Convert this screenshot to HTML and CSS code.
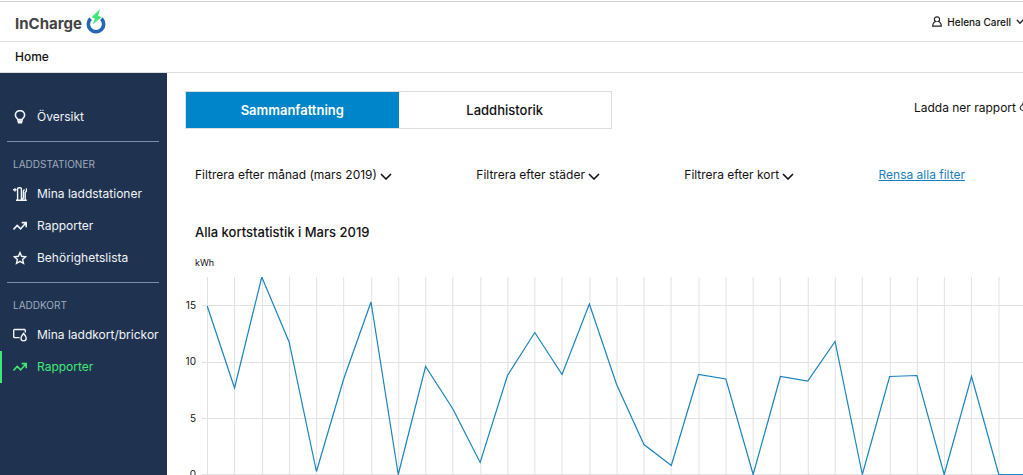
FILE: index.html
```html
<!DOCTYPE html>
<html lang="sv">
<head>
<meta charset="utf-8">
<meta name="viewport" content="width=device-width, initial-scale=1">
<title>InCharge</title>
<link rel="stylesheet" href="styles.css">
</head>
<body>
<header class="topbar">
  <a class="brand" href="#">
    <span class="brand-name">InCharge</span>
    <svg class="brand-mark" width="20" height="26" viewBox="0 0 20 26" aria-hidden="true">
      <path d="M4.6 9.6A7.7 7.7 0 1 0 15.4 9.6" fill="none" stroke="#2468b4" stroke-width="3.6"/>
      <path d="M14 0 5.6 8.2l3.2 1.2L6.8 15.2l8.8-7-3.4-1.5z" fill="#3fe877"/>
    </svg>
  </a>
  <button class="user" type="button">
    <svg width="10" height="11" viewBox="0 0 10 11" fill="none" stroke="#222" stroke-width="1.2" aria-hidden="true"><path d="M5 .8a2.5 2.5 0 0 1 1.3 4.7C8 6 9.2 7.5 9.3 10.2H.7C.8 7.5 2 6 3.7 5.5A2.5 2.5 0 0 1 5 .8z"/></svg>
    <span>Helena Carell</span>
    <svg width="8" height="6" viewBox="0 0 8 6" fill="none" stroke="#222" stroke-width="1.3" aria-hidden="true"><path d="m.8.8 3.2 3.4L7.2.8"/></svg>
  </button>
</header>
<nav class="crumbs" aria-label="Sökväg"><a href="#">Home</a></nav>
<div class="layout">
  <nav class="sidebar" aria-label="Meny">
    <a class="item" href="#">
      <svg class="icon" viewBox="0 0 14 14" fill="none" stroke="currentColor" stroke-width="1.6"><path d="M4.8 9.6C4.6 8.4 2.4 7.7 2.4 5a4.6 4.4 0 0 1 9.2 0c0 2.7-2.2 3.4-2.4 4.6z"/><path d="M4.2 11h5.6M4.8 12.6h4.4"/></svg>
      Översikt
    </a>
    <section class="group">
      <h2 class="group-title">LADDSTATIONER</h2>
      <a class="item" href="#">
        <svg class="icon" viewBox="0 0 14 14" fill="none" stroke="currentColor" stroke-width="1.4"><path d="M3 13.3h10.8M4.6 13V2q0-1.3 1.3-1.3h1.2Q8.4.7 8.4 2v11M8.4 11.5q2 1 2-.8V4.5q0-1.6 1.3-1.8M12.2 12.8V5.5l1.3-1.4V1.2M0 2.8h3.6M2 1.2v3.4"/></svg>
        Mina laddstationer
      </a>
      <a class="item" href="#">
        <svg class="icon" viewBox="0 0 14 14" fill="none" stroke="currentColor" stroke-width="1.6"><path d="m.5 10.5 3.7-4 3.4 3.4 5.2-6M8.7 3.6h4.5v4.6"/></svg>
        Rapporter
      </a>
      <a class="item" href="#">
        <svg class="icon" viewBox="0 0 14 14" fill="none" stroke="currentColor" stroke-width="1.4"><path d="m7 1.6 1.6 3.7 4 .4-3 2.7.9 4L7 10.3l-3.5 2.1.9-4-3-2.7 4-.4z"/></svg>
        Behörighetslista
      </a>
    </section>
    <section class="group">
      <h2 class="group-title">LADDKORT</h2>
      <a class="item" href="#">
        <svg class="icon" viewBox="0 0 14 14" fill="none" stroke="currentColor" stroke-width="1.4"><path d="M6.6 9.6H1.4L.7 8.9V2.2l.7-.7h10.2l.7.7v2.4M10.6 5.4c1.4 1.8 2.6 3.2 2.6 4.9a2.6 2.6 0 0 1-5.2 0c0-1.7 1.2-3.1 2.6-4.9z"/></svg>
        Mina laddkort/brickor
      </a>
      <a class="item active" href="#" aria-current="page">
        <svg class="icon" viewBox="0 0 14 14" fill="none" stroke="currentColor" stroke-width="1.6"><path d="m.5 10.5 3.7-4 3.4 3.4 5.2-6M8.7 3.6h4.5v4.6"/></svg>
        Rapporter
      </a>
    </section>
  </nav>
  <main class="content">
    <div class="actions">
      <div class="tabs" role="tablist">
        <button class="tab selected" type="button" role="tab" aria-selected="true">Sammanfattning</button>
        <button class="tab" type="button" role="tab" aria-selected="false">Laddhistorik</button>
      </div>
      <button class="download" type="button">
        <span>Ladda ner rapport</span>
        <svg width="14" height="12" viewBox="0 0 14 12" fill="none" stroke="#333" stroke-width="1.1" aria-hidden="true"><path d="M5 8.2H3.2a2.4 2.4 0 0 1-.2-4.7A4 4 0 0 1 10.6 3a2.7 2.7 0 0 1 .2 5.2H9M7 5v6M5 9l2 2 2-2"/></svg>
      </button>
    </div>
    <div class="filters">
      <button class="filter" type="button">Filtrera efter månad (mars 2019)<svg class="chevron" viewBox="0 0 12 7"><path d="m1 1 5 5 5-5"/></svg></button>
      <button class="filter" type="button">Filtrera efter städer<svg class="chevron" viewBox="0 0 12 7"><path d="m1 1 5 5 5-5"/></svg></button>
      <button class="filter" type="button">Filtrera efter kort<svg class="chevron" viewBox="0 0 12 7"><path d="m1 1 5 5 5-5"/></svg></button>
      <a class="clear" href="#">Rensa alla filter</a>
    </div>
    <h1 class="title">Alla kortstatistik i Mars 2019</h1>
    <div class="unit">kWh</div>
    <div class="chart">
      <div class="axis"><span>15</span><span>10</span><span>5</span><span>0</span></div>
      <svg class="plot" viewBox="0 0 820 198" preserveAspectRatio="none" role="img" aria-label="Förbrukning per dag i kWh">
        <path class="grid" d="M0 28.5H820M0 85.5H820M0 141.5H820M0 197.5H820M5.5 0V198M32.5 0V198M60.5 0V198M87.5 0V198M114.5 0V198M141.5 0V198M169.5 0V198M196.5 0V198M223.5 0V198M250.5 0V198M278.5 0V198M305.5 0V198M332.5 0V198M359.5 0V198M387.5 0V198M414.5 0V198M441.5 0V198M468.5 0V198M496.5 0V198M523.5 0V198M550.5 0V198M577.5 0V198M605.5 0V198M632.5 0V198M659.5 0V198M687.5 0V198M714.5 0V198M741.5 0V198M768.5 0V198M796 0V198"/>
        <polyline class="series" points="5.2,29 32.5,111 59.7,0 87,65 114.3,194.5 141.5,102 168.8,25 196,197.5 223.3,89.5 250.6,132 277.8,185.5 305.1,98.5 332.4,55.5 359.6,97.5 386.9,27 414.1,107.5 441.4,167.5 468.7,188.5 495.9,97.5 523.2,102 550.5,197.5 577.7,99.5 605,104 632.3,64.5 659.5,197.5 686.8,99.5 714,98.5 741.3,197.5 768.6,99.5 795.8,197.5 820,197.5"/>
      </svg>
    </div>
  </main>
</div>
</body>
</html>
```
FILE: styles.css
```css
* { box-sizing: border-box; }
body {
  margin: 0;
  min-height: 100vh;
  display: flex;
  flex-direction: column;
  overflow-x: hidden;
  background: #fff;
  color: #111;
  font: 13px/20px Inter, "Liberation Sans", sans-serif;
}
button {
  margin: 0;
  padding: 0;
  border: 0;
  background: none;
  color: inherit;
  font: inherit;
  cursor: pointer;
}
a { color: inherit; text-decoration: none; }
svg { flex: none; display: block; }

.topbar {
  display: flex;
  justify-content: space-between;
  align-items: center;
  height: 41px;
  margin-top: 1px;
  padding-left: 15px;
  border-top: 1px solid #ccc;
  border-bottom: 1px solid #ddd;
}
.brand { display: flex; align-items: center; gap: 4px; }
.brand-name { padding-top: 5px; color: #444; font-size: 15px; font-weight: 700; }
.user {
  display: flex;
  align-items: center;
  gap: 5px;
  margin-right: -1px;
  font-size: 10px;
  font-weight: 500;
}

.crumbs {
  padding: 5px 15px;
  border-bottom: 1px solid #ddd;
  font-size: 12px;
  font-weight: 500;
}

.layout { display: flex; flex: 1; }
.sidebar {
  flex: none;
  width: 167px;
  padding-top: 28px;
  background: #1f3350;
  color: #f2f5f9;
}
.item {
  display: flex;
  align-items: center;
  gap: 10px;
  height: 32px;
  padding-left: 13px;
  font-size: 12px;
  white-space: nowrap;
}
.icon { width: 14px; height: 14px; }
.active {
  padding-left: 11px;
  border-left: 2px solid #3fe877;
  color: #3fe877;
}
.group { padding-top: 8px; }
.group::before {
  content: "";
  display: block;
  margin: 0 8px 12px 7px;
  border-top: 1px solid #7d8ea8;
}
.group-title {
  margin: 0 0 4px;
  padding-left: 13px;
  color: #a0acbf;
  font-size: 10px;
  font-weight: 400;
}

.content { flex: 1; min-width: 0; padding: 18px 0 0 18px; }
.actions { display: flex; justify-content: space-between; }
.tabs { display: flex; width: 427px; height: 38px; border: 1px solid #ddd; }
.tab { flex: 1; font-weight: 500; }
.selected { background: #0085ca; color: #fff; font-weight: 600; }
.download {
  display: flex;
  align-items: center;
  gap: 3px;
  height: 34px;
  margin-right: -10px;
  font-size: 12px;
}
.filters {
  display: flex;
  justify-content: space-between;
  margin: 36px 58px 0 10px;
  font-size: 12px;
}
.filter { display: flex; align-items: center; gap: 3px; }
.chevron {
  width: 12px;
  height: 7px;
  margin-top: 3px;
  fill: none;
  stroke: #111;
  stroke-width: 1.6;
}
.clear { color: #1a7fc1; text-decoration: underline; }
.title { margin: 37px 0 0 10px; font-size: 13px; line-height: 20px; font-weight: 500; }
.unit { margin: 11px 0 0 10px; font-size: 9px; }
.chart { display: flex; gap: 6px; height: 198px; margin-top: 4px; }
.axis {
  flex: none;
  display: flex;
  flex-direction: column;
  justify-content: space-between;
  width: 11px;
  height: 179px;
  margin-top: 23px;
  font-size: 10px;
  line-height: 10px;
  text-align: right;
}
.plot { flex: 1; min-width: 0; height: 198px; }
.grid { fill: none; stroke: #e2e2e2; vector-effect: non-scaling-stroke; }
.series { fill: none; stroke: #1a83bd; stroke-width: 1.2; vector-effect: non-scaling-stroke; }
```
